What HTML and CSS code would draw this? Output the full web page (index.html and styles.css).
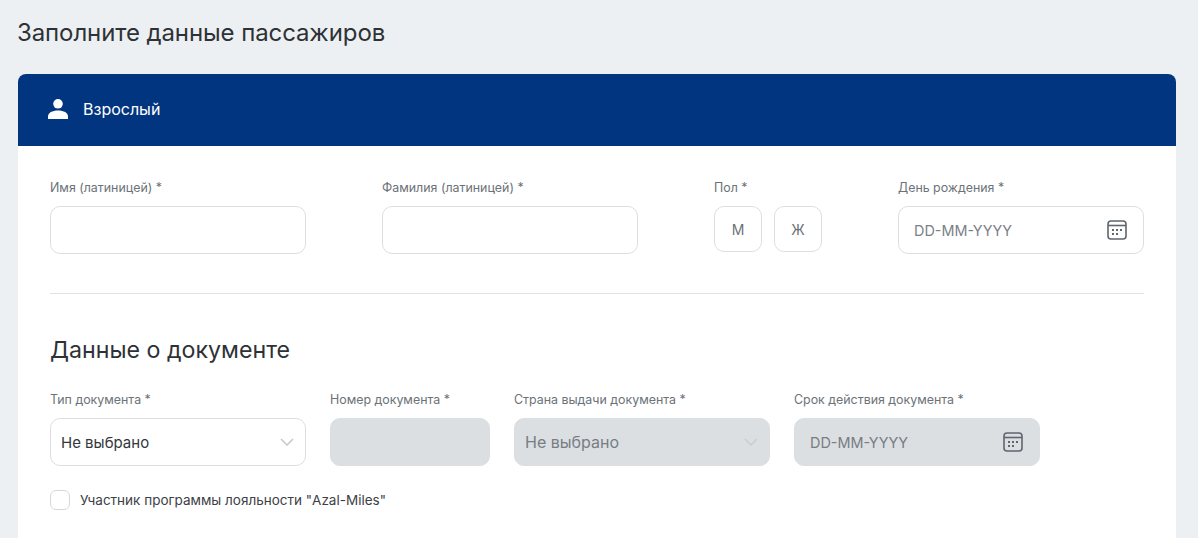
FILE: index.html
```html
<!DOCTYPE html>
<html lang="ru">
<head>
    <meta charset="UTF-8">
    <meta name="viewport" content="width=device-width, initial-scale=1.0">
    <title>Данные пассажиров</title>
    <link rel="stylesheet" href="styles.css">
</head>
<body>
    <h1 class="page-title">Заполните данные пассажиров</h1>

    <div class="card">
        <div class="card-header">
            <svg class="user-icon" width="20" height="20" viewBox="0 0 20 20" fill="#fff">
                <circle cx="10" cy="4.800" r="4.800"/>
                <path d="M0 20v-2.500c0-3.800 4.200-6 10-6s10 2.200 10 6v2.500z"/>
            </svg>
            <span>Взрослый</span>
        </div>

        <div class="card-body">
            <div class="form-row person-row">
                <div class="form-group w-256">
                    <label>Имя (латиницей) *</label>
                    <input type="text" class="field">
                </div>
                <div class="form-group w-256">
                    <label>Фамилия (латиницей) *</label>
                    <input type="text" class="field">
                </div>
                <div class="form-group">
                    <label>Пол *</label>
                    <div class="gender-buttons">
                        <button class="gender-button">М</button>
                        <button class="gender-button">Ж</button>
                    </div>
                </div>
                <div class="form-group w-246">
                    <label>День рождения *</label>
                    <div class="field date-field">
                        <span class="placeholder">DD-MM-YYYY</span>
                        <svg class="calendar-icon" width="20" height="20" viewBox="0 0 20 20" fill="none" stroke="#5f666d" stroke-width="1.600">
                            <rect x="1" y="1" width="18" height="18" rx="3"/>
                            <path d="M1 5.500h18"/>
                            <g fill="#5f666d" stroke="none">
                                <rect x="5" y="9" width="2" height="2"/>
                                <rect x="9" y="9" width="2" height="2"/>
                                <rect x="13" y="9" width="2" height="2"/>
                                <rect x="5" y="13" width="2" height="2"/>
                                <rect x="9" y="13" width="2" height="2"/>
                            </g>
                        </svg>
                    </div>
                </div>
            </div>

            <hr class="divider">

            <h2 class="section-title">Данные о документе</h2>

            <div class="form-row document-row">
                <div class="form-group w-256">
                    <label>Тип документа *</label>
                    <div class="field select-field">
                        <span>Не выбрано</span>
                        <svg class="chevron" width="14" height="8" viewBox="0 0 14 8" fill="none" stroke="#c4c8cc" stroke-width="1.500">
                            <path d="M1 1l6 6 6-6"/>
                        </svg>
                    </div>
                </div>
                <div class="form-group w-160">
                    <label>Номер документа *</label>
                    <div class="field disabled"></div>
                </div>
                <div class="form-group w-256">
                    <label>Страна выдачи документа *</label>
                    <div class="field select-field disabled">
                        <span>Не выбрано</span>
                        <svg class="chevron" width="14" height="8" viewBox="0 0 14 8" fill="none" stroke="#c9cdd1" stroke-width="1.500">
                            <path d="M1 1l6 6 6-6"/>
                        </svg>
                    </div>
                </div>
                <div class="form-group w-246">
                    <label>Срок действия документа *</label>
                    <div class="field date-field disabled">
                        <span class="placeholder">DD-MM-YYYY</span>
                        <svg class="calendar-icon" width="20" height="20" viewBox="0 0 20 20" fill="none" stroke="#5f666d" stroke-width="1.600">
                            <rect x="1" y="1" width="18" height="18" rx="3"/>
                            <path d="M1 5.500h18"/>
                            <g fill="#5f666d" stroke="none">
                                <rect x="5" y="9" width="2" height="2"/>
                                <rect x="9" y="9" width="2" height="2"/>
                                <rect x="13" y="9" width="2" height="2"/>
                                <rect x="5" y="13" width="2" height="2"/>
                                <rect x="9" y="13" width="2" height="2"/>
                            </g>
                        </svg>
                    </div>
                </div>
            </div>

            <label class="loyalty">
                <span class="checkbox"></span>
                <span>Участник программы лояльности "Azal-Miles"</span>
            </label>
        </div>
    </div>
</body>
</html>
```

FILE: styles.css
```css
html, body {
    height: 538px;
    overflow: hidden;
}

body {
    font-family: Inter, "Liberation Sans", sans-serif;
    margin: 0;
    padding: 0 22px 0 18px;
    background-color: #edf0f3;
    color: #333;
}

.page-title {
    font-size: 24px;
    font-weight: 400;
    line-height: 32px;
    letter-spacing: -0.1px;
    margin: 0 0 0 -1px;
    padding: 17px 0 25px;
    color: #2e3236;
}

.card {
    background-color: #fff;
    border-radius: 8px 8px 0 0;
    height: 464px;
}

.card-header {
    display: flex;
    align-items: center;
    gap: 15px;
    box-sizing: border-box;
    height: 72px;
    padding: 0 30px 2px;
    background-color: #02357f;
    border-radius: 8px 8px 0 0;
    color: #fff;
    font-size: 16px;
}

.card-body {
    padding: 32px 32px 0;
}

.form-row {
    display: flex;
}

.person-row {
    gap: 76px;
}

.document-row {
    gap: 24px;
}

.form-group {
    display: flex;
    flex-direction: column;
}

.w-256 { width: 256px; }
.w-246 { width: 246px; }
.w-160 { width: 160px; }

.form-group label {
    font-size: 12.4px;
    line-height: 19px;
    margin-bottom: 9px;
    color: #6c7278;
}

.field {
    display: flex;
    align-items: center;
    justify-content: space-between;
    box-sizing: border-box;
    width: 100%;
    height: 48px;
    padding: 0 15px;
    background-color: #fff;
    border: 1px solid #dcdfe2;
    border-radius: 10px;
    font-family: inherit;
    font-size: 14.4px;
}

.placeholder {
    color: #7b8187;
}

.date-field {
    padding-right: 16px;
}

.select-field {
    padding: 0 11px 0 10px;
    font-size: 15px;
    color: #33373b;
}

.field.disabled {
    background-color: #dbdfe2;
    border-color: #dbdfe2;
    color: #777d83;
}

.select-field.disabled {
    font-size: 16px;
}

.field.disabled .placeholder {
    color: #777d83;
}

.gender-buttons {
    display: flex;
    gap: 12px;
}

.gender-button {
    width: 48px;
    height: 46px;
    background-color: #fff;
    border: 1px solid #dcdfe2;
    border-radius: 10px;
    font-family: inherit;
    font-size: 14px;
    color: #6c7278;
}

.divider {
    border: none;
    border-top: 1px solid #dfe2e5;
    margin: 39px 0 0;
}

.section-title {
    font-size: 23.200px;
    font-weight: 400;
    line-height: 32px;
    margin: 40px 0 24px;
    color: #2e3236;
}

.loyalty {
    display: flex;
    align-items: center;
    gap: 10px;
    margin-top: 24px;
    font-size: 13.500px;
    color: #3d4146;
}

.checkbox {
    box-sizing: border-box;
    width: 20px;
    height: 20px;
    border: 1px solid #d6d9dc;
    border-radius: 6px;
    background-color: #fff;
}
```
